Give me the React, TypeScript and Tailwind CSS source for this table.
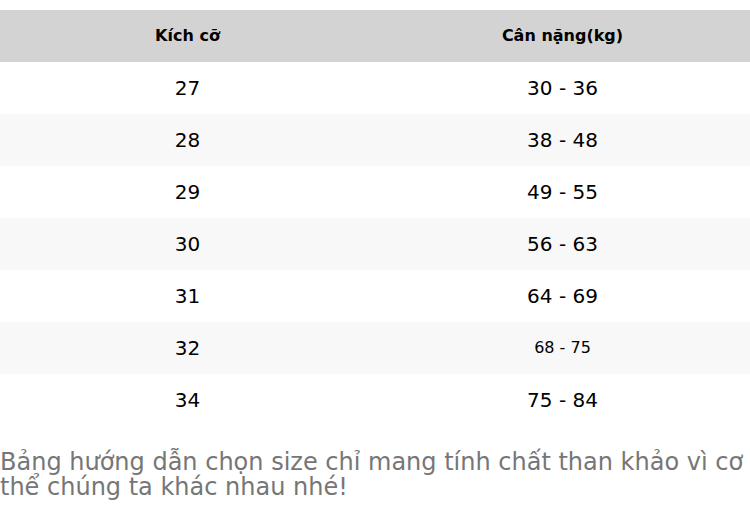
import React from 'react';

const rows: { size: string; weight: string; small?: boolean }[] = [
  { size: '27', weight: '30 - 36' },
  { size: '28', weight: '38 - 48' },
  { size: '29', weight: '49 - 55' },
  { size: '30', weight: '56 - 63' },
  { size: '31', weight: '64 - 69' },
  { size: '32', weight: '68 - 75', small: true },
  { size: '34', weight: '75 - 84' },
];

const App: React.FC = () => {
  return (
    <div className="w-[750px] bg-white pt-[10px] font-['DejaVu_Sans',sans-serif] text-black">
      <table className="w-full border-collapse table-fixed">
        <thead>
          <tr className="bg-[#d3d3d3] h-[52px]">
            <th className="w-1/2 text-[16px] font-bold text-center">Kích cỡ</th>
            <th className="w-1/2 text-[16px] font-bold text-center">Cân nặng(kg)</th>
          </tr>
        </thead>
        <tbody>
          {rows.map((r, i) => (
            <tr key={r.size} className={`h-[52px] ${i % 2 === 1 ? 'bg-[#f8f8f8]' : 'bg-white'}`}>
              <td className="text-center text-[20px]">{r.size}</td>
              <td className={`text-center ${r.small ? 'text-[16px]' : 'text-[20px]'}`}>{r.weight}</td>
            </tr>
          ))}
        </tbody>
      </table>
      <p className="mt-[24px] text-[24px] leading-[25px] text-[#767676]">
        Bảng hướng dẫn chọn size chỉ mang tính chất than khảo vì cơ thể chúng ta khác nhau nhé!
      </p>
    </div>
  );
};

export default App;
